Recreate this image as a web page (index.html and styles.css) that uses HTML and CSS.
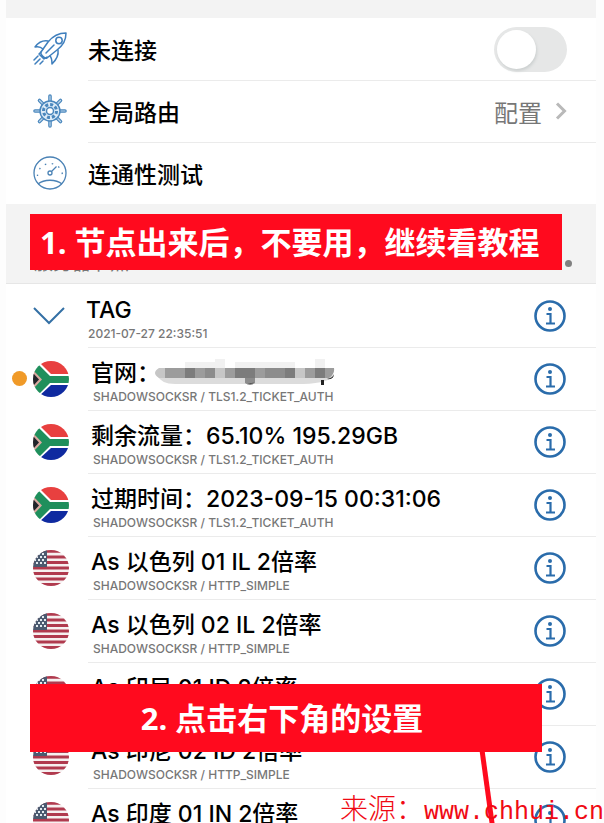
FILE: index.html
```html
<!DOCTYPE html>
<html lang="zh">

<head>
    <meta charset="UTF-8">
    <meta name="viewport" content="width=device-width, initial-scale=1.0">
    <title>节点列表</title>
    <link rel="stylesheet" href="styles.css">
</head>

<body>
    <!-- 图标 -->
    <svg class="defs" aria-hidden="true">
        <symbol id="za" viewBox="0 0 36 36">
            <clipPath id="round"><circle cx="18" cy="18" r="18" /></clipPath>
            <g clip-path="url(#round)">
                <path fill="#fff" d="M0 0h36v36H0z" />
                <path fill="#e8403f" d="M5 0h31v13H18z" />
                <path fill="#0f2aa0" d="M5 36h31V24H18z" />
                <path fill="#1f8f5c" d="M0 2l5 1 12 12h19v7H17L5 34l-5 1v-8l8-8.500L0 10z" />
                <path fill="#d9a9a0" d="M0 9l9 9.500L0 28z" />
                <path fill="#20242a" d="M0 12l6 6.500L0 25z" />
            </g>
        </symbol>
        <symbol id="us" viewBox="0 0 36 36">
            <g clip-path="url(#round)">
                <path fill="#f6f0f0" d="M0 0h36v36H0z" />
                <path stroke="#b03a4e" stroke-width="2.800" d="M0 1.400h36M0 7h36M0 12.500h36M0 18h36M0 23.500h36M0 29h36M0 34.500h36" />
                <path fill="#4b5a70" d="M0 0h14v17H0z" />
                <path stroke="#e4ebf0" stroke-width="2" stroke-dasharray="2 2" d="M1 4h12M3 7h10M1 10h12M3 13h10" />
            </g>
        </symbol>
        <symbol id="info" viewBox="0 0 32 32">
            <circle cx="16" cy="16" r="14.500" fill="none" stroke="#2a6cab" stroke-width="2.600" />
            <circle cx="16" cy="9" r="2" fill="#2a6cab" />
            <path fill="none" stroke="#2a6cab" stroke-width="2.200" d="M12.500 14h4v9M12 23.500h9" />
        </symbol>
    </svg>

    <main class="screen">
        <div class="topbar"></div>

        <ul class="settings">
            <li>
                <svg class="icon" viewBox="0 0 34 34">
                    <g fill="none" stroke="#3f7fbd" stroke-width="1.500" stroke-linejoin="round" stroke-linecap="round">
                        <path d="M33 1C24 1 19 5 15 10L8 20c-1 2 3 7 6 6l10-8c6-5 9-9 9-17z" />
                        <circle cx="26" cy="8.500" r="3.200" />
                        <path d="M15 9C9 8 5 11 2 15c4-1 6 0 8 2M25 18c1 6-2 10-6 14 0-4 0-6-2-8M21 13l-8 8M8 20l-2 2 5 5 3-2" />
                        <path d="M5 24l-4 4M7 27l-5 5M10 29l-3 3" />
                    </g>
                </svg>
                <label for="conn">未连接</label>
                <input type="checkbox" role="switch" class="switch" id="conn">
            </li>
            <li>
                <svg class="icon" viewBox="0 0 34 34">
                    <g fill="none" stroke="#4a87bd" stroke-linecap="round">
                        <path stroke-width="3.600" d="M17 2v6M17 26v6M2 17h6M26 17h6M6.500 6.500l4 4M23.500 23.500l4 4M27.500 6.500l-4 4M10.500 23.500l-4 4" />
                        <path stroke="#b9d4ea" stroke-width="1.200" d="M17 2v5M17 27v5M2 17h5M27 17h5M6.500 6.500l3 3M24.500 24.500l3 3M27.500 6.500l-3 3M9.500 24.500l-3 3" />
                        <circle cx="17" cy="17" r="10" stroke-width="1.500" fill="#dcebf7" />
                        <circle cx="17" cy="17" r="6.500" stroke-width="3" stroke-dasharray="3 2" stroke-linecap="butt" />
                        <circle cx="17" cy="17" r="3.500" stroke-width="1.500" fill="#fff" />
                    </g>
                </svg>
                <span>全局路由</span>
                <a href="#" class="more">配置
                    <svg viewBox="0 0 12 18"><path fill="none" stroke="#b9b9b9" stroke-width="3" d="M2 1.500L9.500 9 2 16.500" /></svg>
                </a>
            </li>
            <li>
                <svg class="icon" viewBox="0 0 34 34">
                    <g fill="none" stroke="#4a82b5" stroke-width="1.300">
                        <circle cx="17" cy="17" r="16" />
                        <path d="M5 28c6-5 18-5 24 0M18.500 15.500l5-5" />
                        <circle cx="17" cy="17" r="2" />
                        <path stroke-dasharray="1.500 5.600" d="M4.500 20a12.500 12.500 0 1 1 25 0" />
                    </g>
                </svg>
                <span>连通性测试</span>
            </li>
        </ul>

        <div class="section">
            <h2>服务器节点</h2>
            <button class="dots" aria-label="更多"><i></i><i></i><i></i></button>
            <p class="note note-first">1. 节点出来后，不要用，继续看教程</p>
        </div>

        <ul class="nodes">
            <li>
                <svg class="arrow" viewBox="0 0 32 18"><path fill="none" stroke="#3470a5" stroke-width="2" d="M1 1l15 15L31 1" /></svg>
                <div class="text">
                    <h3>TAG</h3>
                    <p>2021-07-27 22:35:51</p>
                </div>
                <button class="info" aria-label="详情"><svg><use href="#info" /></svg></button>
            </li>
            <li class="current">
                <svg class="flag"><use href="#za" /></svg>
                <div class="text">
                    <h3>官网：<svg class="mosaic" viewBox="5 0 175 28">
                            <path fill="#f1f1f1" d="M60 0h10v9H60zM160 0h10v9h-10zM30 3h30v6H30zM80 3h60v6H80z" />
                            <path fill="#dcdcdc" d="M2 16h176q-2 8-30 9H20Q6 25 2 16z" />
                            <path fill="#c6c6c6" d="M4 9h6v10H4q-8-5 0-10zM60 9h10v10H60zM140 9h10v10h-10z" />
                            <path fill="#9c9c9c" d="M10 9h50v10H10zM70 9h40v10H70zM110 9h30v10h-30zM150 9h29q1 6-5 10h-24z" />
                            <path fill="#7c7c7c" d="M30 9h10v10H30zM80 9h20v10H80zM130 9h10v10h-10zM160 9h10v10h-10z" />
                            <path fill="#8c8c8c" d="M90 19h10v5q-5 4-10 0zM50 9h10v10H50zM110 9h20v10h-20z" />
                            <path fill="#222" d="M166 21h3v5h-3zM91 23q4 3 8 0-3 4-8 0zM172 20q6-1 7-5 0 6-7 5z" />
                        </svg></h3>
                    <p>SHADOWSOCKSR / TLS1.2_TICKET_AUTH</p>
                </div>
                <button class="info" aria-label="详情"><svg><use href="#info" /></svg></button>
            </li>
            <li>
                <svg class="flag"><use href="#za" /></svg>
                <div class="text">
                    <h3>剩余流量：65.10% 195.29GB</h3>
                    <p>SHADOWSOCKSR / TLS1.2_TICKET_AUTH</p>
                </div>
                <button class="info" aria-label="详情"><svg><use href="#info" /></svg></button>
            </li>
            <li>
                <svg class="flag"><use href="#za" /></svg>
                <div class="text">
                    <h3>过期时间：2023-09-15 00:31:06</h3>
                    <p>SHADOWSOCKSR / TLS1.2_TICKET_AUTH</p>
                </div>
                <button class="info" aria-label="详情"><svg><use href="#info" /></svg></button>
            </li>
            <li>
                <svg class="flag"><use href="#us" /></svg>
                <div class="text">
                    <h3>As 以色列 01 IL 2倍率</h3>
                    <p>SHADOWSOCKSR / HTTP_SIMPLE</p>
                </div>
                <button class="info" aria-label="详情"><svg><use href="#info" /></svg></button>
            </li>
            <li>
                <svg class="flag"><use href="#us" /></svg>
                <div class="text">
                    <h3>As 以色列 02 IL 2倍率</h3>
                    <p>SHADOWSOCKSR / HTTP_SIMPLE</p>
                </div>
                <button class="info" aria-label="详情"><svg><use href="#info" /></svg></button>
            </li>
            <li>
                <svg class="flag"><use href="#us" /></svg>
                <div class="text">
                    <h3>As 印尼 01 ID 2倍率</h3>
                    <p>SHADOWSOCKSR / HTTP_SIMPLE</p>
                </div>
                <button class="info" aria-label="详情"><svg><use href="#info" /></svg></button>
                <p class="note note-second">2. 点击右下角的设置
                    <svg class="pointer" viewBox="0 0 30 100"><path stroke="#ff0a1e" stroke-width="5" d="M3 -2l14 102" /></svg>
                </p>
            </li>
            <li>
                <svg class="flag"><use href="#us" /></svg>
                <div class="text">
                    <h3>As 印尼 02 ID 2倍率</h3>
                    <p>SHADOWSOCKSR / HTTP_SIMPLE</p>
                </div>
                <button class="info" aria-label="详情"><svg><use href="#info" /></svg></button>
            </li>
            <li>
                <svg class="flag"><use href="#us" /></svg>
                <div class="text">
                    <h3>As 印度 01 IN 2倍率</h3>
                    <p>SHADOWSOCKSR / HTTP_SIMPLE</p>
                </div>
                <button class="info" aria-label="详情"><svg><use href="#info" /></svg></button>
            </li>
        </ul>

        <p class="source"><span>来源：</span>www.chhui.cn</p>
    </main>
</body>

</html>
```

FILE: styles.css
```css
body,
ul,
li,
h2,
h3,
p {
    padding: 0;
    margin: 0;
}

body {
    background: #fdfdfd;
    color: #000;
    font-family: Inter, "Noto Sans CJK SC", sans-serif;
}

li {
    list-style: none;
}

button {
    padding: 0;
    border: 0;
    background: none;
    cursor: pointer;
}

.defs {
    position: absolute;
    width: 0;
    height: 0;
}

.screen {
    position: relative;
    height: 100vh;
    padding: 0 8px 0 6px;
    overflow: hidden;
}

.topbar {
    height: 18px;
    background: #f3f3f3;
}

/* 设置 */
.settings li {
    position: relative;
    display: flex;
    align-items: center;
    height: 62px;
    padding: 0 29px 0 27px;
    background: #fff;
    font-size: 23px;
    font-weight: 500;
}

.settings li + li::before,
.nodes li + li::before {
    content: "";
    position: absolute;
    top: 0;
    left: 82px;
    right: 0;
    height: 1px;
    background: #ebebeb;
}

.icon {
    width: 34px;
    height: 34px;
    margin-right: 21px;
}

.switch {
    appearance: none;
    width: 73px;
    height: 45px;
    margin: 0 0 0 auto;
    border-radius: 23px;
    background: #e6e7e7;
}

.switch::before {
    content: "";
    display: block;
    width: 39px;
    height: 39px;
    margin: 3px;
    border-radius: 50%;
    background: #fff;
    box-shadow: 1px 2px 3px #ccd0d0;
}

.more {
    display: flex;
    align-items: center;
    gap: 13px;
    margin-left: auto;
    color: #777;
    font-size: 24px;
    font-weight: 400;
    text-decoration: none;
}

.more svg {
    width: 12px;
    height: 18px;
}

/* 分组标题 */
.section {
    position: relative;
    display: flex;
    align-items: flex-end;
    justify-content: space-between;
    height: 70px;
    padding: 0 24px 9px 28px;
    border-bottom: 1px solid #e6e6e6;
    background: #f3f3f3;
}

.section h2 {
    color: #777;
    font-size: 19px;
    font-weight: 400;
    line-height: 20px;
}

.dots {
    display: flex;
    gap: 4px;
    padding-bottom: 7px;
}

.dots i {
    width: 7px;
    height: 7px;
    border-radius: 50%;
    background: #808080;
}

/* 节点 */
.nodes li {
    position: relative;
    display: flex;
    align-items: center;
    height: 63px;
    padding: 0 30px 0 27px;
    background: #fff;
}

.flag {
    width: 36px;
    height: 36px;
    margin-right: 22px;
}

.arrow {
    width: 32px;
    height: 18px;
    margin-right: 21px;
}

.text {
    padding-top: 9px;
}

.text h3 {
    font-size: 23px;
    font-weight: 500;
    line-height: 28px;
    white-space: nowrap;
}

.text > p {
    padding-left: 2px;
    color: #777;
    font-size: 12px;
    font-weight: 500;
    line-height: 20px;
}

.info {
    margin-left: auto;
}

.info svg {
    display: block;
    width: 32px;
    height: 32px;
}

.current::after {
    content: "";
    position: absolute;
    top: 24px;
    left: 6px;
    width: 15px;
    height: 15px;
    border-radius: 50%;
    background: #f09a28;
}

.mosaic {
    width: 175px;
    height: 28px;
    overflow: visible;
    vertical-align: top;
}

/* 红色提示 */
.note {
    position: absolute;
    z-index: 1;
    box-sizing: border-box;
    background: #ff0a1e;
    color: #fff;
    font-family: "Open Sans", "Noto Sans CJK SC", sans-serif;
    font-size: 31px;
    font-weight: 700;
    white-space: nowrap;
}

.note-first {
    top: 10px;
    left: 24px;
    right: 34px;
    padding-left: 10px;
    line-height: 56px;
}

.note-second {
    top: 22px;
    left: 24px;
    right: 54px;
    padding-right: 8px;
    line-height: 68px;
    text-align: center;
}

.pointer {
    position: absolute;
    top: 100%;
    right: 33px;
    width: 30px;
    height: 100px;
}

.source {
    position: absolute;
    z-index: 2;
    right: 0;
    bottom: 0;
    color: #f00a14;
    font-family: "Liberation Mono", "Noto Sans CJK SC", monospace;
    font-size: 25px;
    line-height: 20px;
    white-space: nowrap;
}

.source span {
    font-size: 28px;
    font-weight: 300;
}
```
